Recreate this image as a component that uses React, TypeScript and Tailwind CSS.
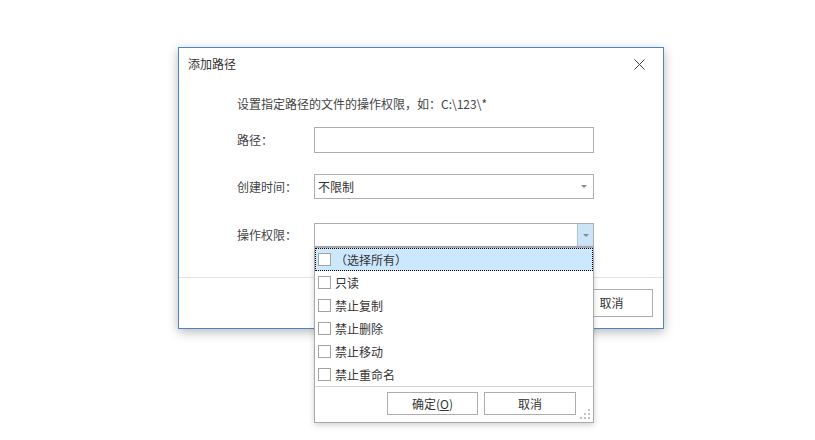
import { useState } from 'react';

const FONT = 'font-["Noto_Sans_CJK_SC",sans-serif]';

const options = ['（选择所有）', '只读', '禁止复制', '禁止删除', '禁止移动', '禁止重命名'];

function Arrow() {
  return (
    <svg width="6" height="3" viewBox="0 0 6 3">
      <path d="M0 0 H6 L3 3 Z" fill="#8a8a8a" />
    </svg>
  );
}

function Grip() {
  const dots = [
    [8, 0],
    [4, 4],
    [8, 4],
    [0, 8],
    [4, 8],
    [8, 8],
  ];
  return (
    <svg width="10" height="10" viewBox="0 0 10 10">
      {dots.map(([x, y]) => (
        <rect key={`${x}-${y}`} x={x} y={y} width="2" height="2" fill="#c2c2c2" />
      ))}
    </svg>
  );
}

function Row({ label, mt, h, children }: { label: string; mt: string; h: string; children: React.ReactNode }) {
  return (
    <div className={`flex items-center ${mt}`}>
      <div className="w-[77px] text-[12px] leading-[16px] text-[#444]">{label}</div>
      <div className={`w-[280px] ${h}`}>{children}</div>
    </div>
  );
}

export default function App() {
  const [checked, setChecked] = useState<boolean[]>(options.map(() => false));

  return (
    <div className={`relative w-[815px] h-[440px] bg-white overflow-hidden ${FONT}`}>
      {/* dialog window */}
      <div className="absolute left-[178px] top-[47px] w-[486px] h-[282px] bg-white border border-[#4a86c5] shadow-[0_3px_10px_rgba(0,0,0,0.28)] flex flex-col">
        <div className="h-[32px] flex items-center justify-between pl-[9px] pr-[18px]">
          <span className="text-[12px] leading-[16px] text-[#333]">添加路径</span>
          <svg width="11" height="11" viewBox="0 0 11 11">
            <path d="M0.5 0.5 L10.5 10.5 M10.5 0.5 L0.5 10.5" stroke="#444" strokeWidth="1" />
          </svg>
        </div>

        <div className="flex-1 pl-[58px] pt-[16px]">
          <div className="text-[12px] leading-[16px] text-[#444]">设置指定路径的文件的操作权限，如：C:\123\*</div>

          <Row label="路径：" mt="mt-[15px]" h="h-[26px]">
            <div className="h-full border border-[#abadb3] bg-white" />
          </Row>

          <Row label="创建时间：" mt="mt-[21px]" h="h-[25px]">
            <div className="h-full border border-[#abadb3] bg-white flex items-center justify-between pl-[3px] pr-[6px]">
              <span className="text-[12px] leading-[16px] text-[#333]">不限制</span>
              <Arrow />
            </div>
          </Row>

          <Row label="操作权限：" mt="mt-[24px]" h="h-[24px]">
            <div className="h-full border border-[#abadb3] bg-white flex justify-end">
              <div className="w-[16px] h-full bg-[#cce4f7] border-l border-[#a6c8e6] flex items-center justify-center">
                <Arrow />
              </div>
            </div>
          </Row>
        </div>

        <div className="h-[51px] border-t border-[#e3e3e3] flex justify-end items-start gap-[6px] pt-[11px] pr-[10px]">
          <button className="w-[83px] h-[28px] border border-[#adadad] bg-white text-[12px] text-[#333]">确定(<u>O</u>)</button>
          <button className="w-[83px] h-[28px] border border-[#adadad] bg-white text-[12px] text-[#333]">取消</button>
        </div>
      </div>

      {/* dropdown popup */}
      <div className="absolute left-[314px] top-[247px] w-[280px] h-[176px] bg-white border border-[#a9a9a9] shadow-[0_2px_6px_rgba(0,0,0,0.18)] flex flex-col">
        <div className="flex flex-col">
          {options.map((opt, i) => (
            <div
              key={opt}
              onClick={() => setChecked(checked.map((c, j) => (j === i ? !c : c)))}
              className={`h-[23px] flex items-center pl-[2px] ${
                i === 0 ? 'bg-[#cce8ff] border border-dotted border-black' : 'border border-transparent'
              }`}
            >
              <div className="w-[13px] h-[13px] border border-[#a3a3a3] bg-white mr-[4px] flex items-center justify-center text-[10px] leading-none">
                {checked[i] ? '✓' : ''}
              </div>
              <span className="text-[12px] leading-[16px] text-[#333]">{opt}</span>
            </div>
          ))}
        </div>
        <div className="flex-1 border-t border-[#d4d4d4] flex items-start justify-end pt-[5px] pr-[1px] relative">
          <div className="flex gap-[6px] mr-[16px]">
            <button className="w-[91px] h-[23px] border border-[#adadad] bg-white text-[12px] leading-[16px] text-[#333]">
              确定(<u>O</u>)
            </button>
            <button className="w-[92px] h-[23px] border border-[#adadad] bg-white text-[12px] leading-[16px] text-[#333]">
              取消
            </button>
          </div>
          <div className="absolute right-[3px] bottom-[3px]">
            <Grip />
          </div>
        </div>
      </div>
    </div>
  );
}
